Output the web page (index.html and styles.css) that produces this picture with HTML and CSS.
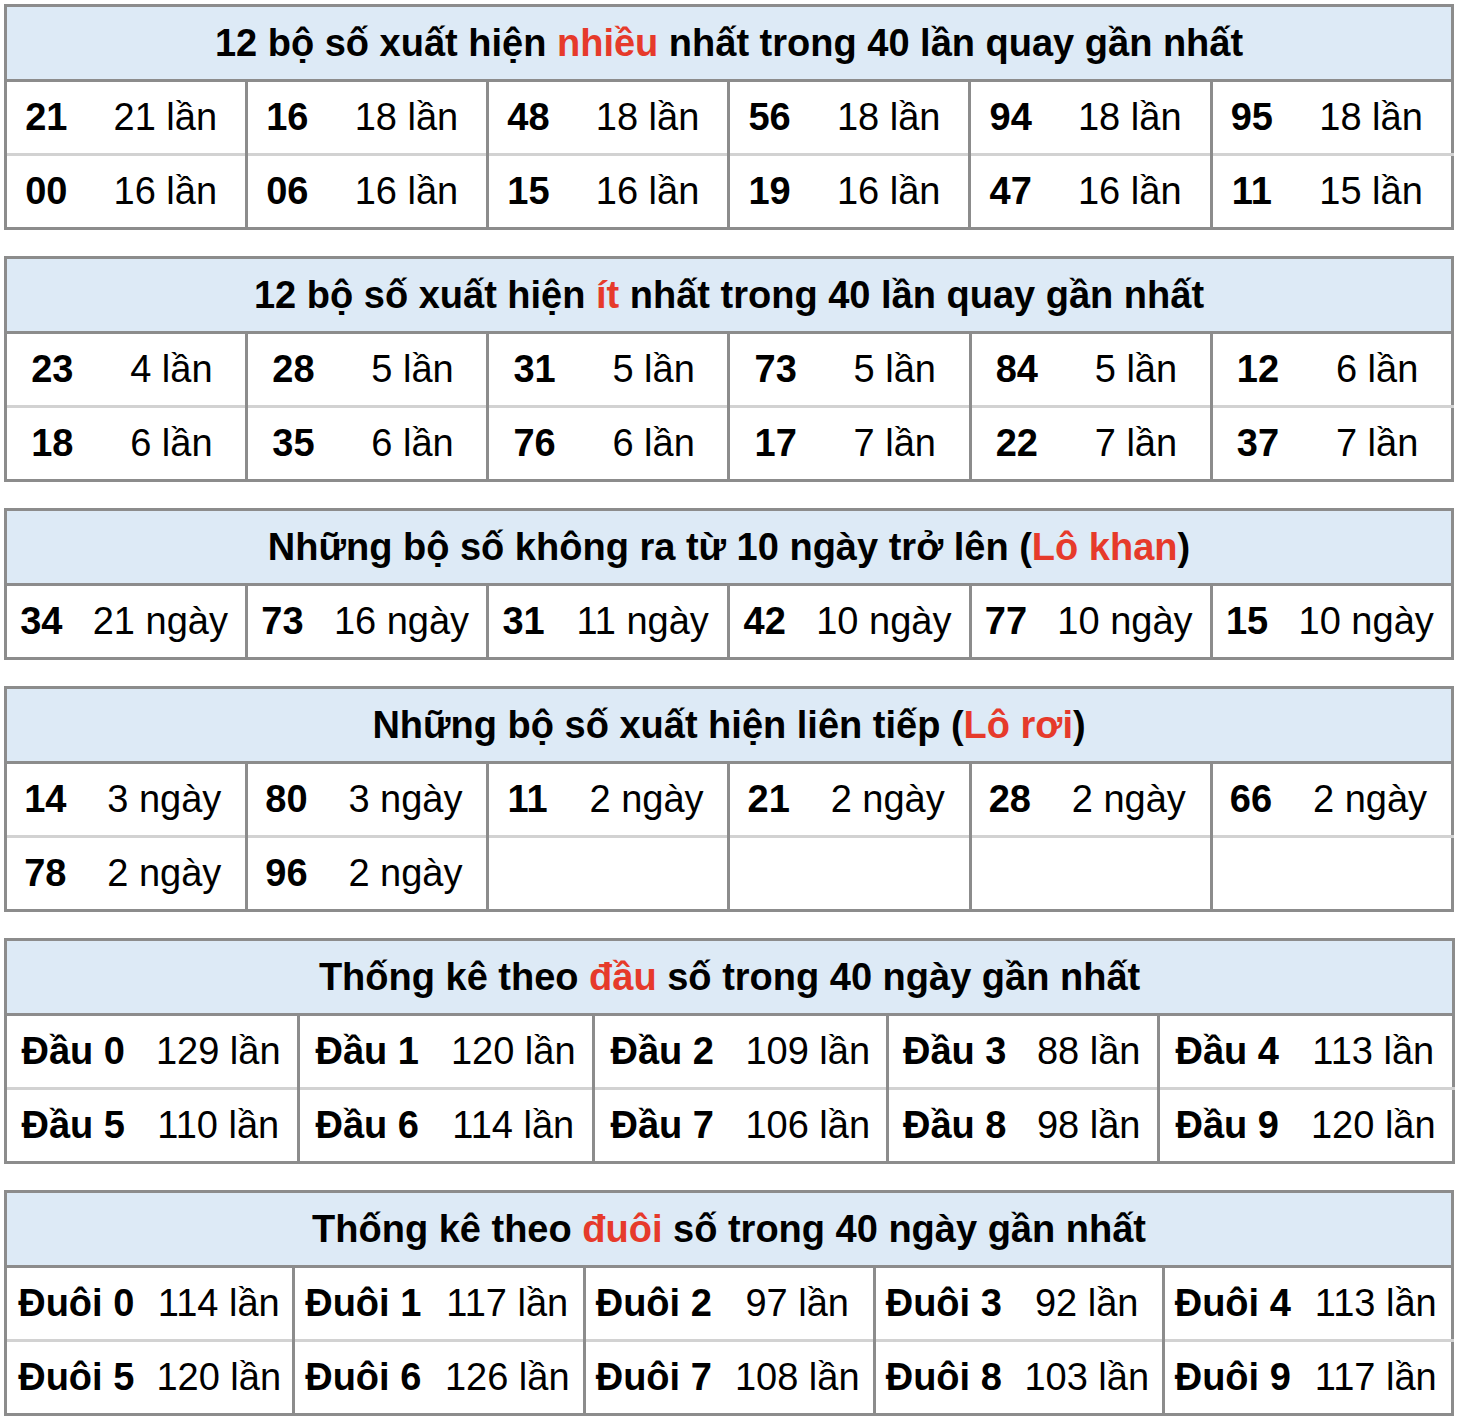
FILE: index.html
```html
<!DOCTYPE html>
<html lang="vi">
<head>
<meta charset="utf-8">
<title>Thống kê lô tô</title>
<link rel="stylesheet" href="styles.css">
</head>
<body>

<table class="stat t1">
  <colgroup><col class="n"><col class="c"><col class="n"><col class="c"><col class="n"><col class="c"><col class="n"><col class="c"><col class="n"><col class="c"><col class="n"><col class="c"></colgroup>
  <tr><th colspan="12">12 bộ số xuất hiện <span class="hl">nhiều</span> nhất trong 40 lần quay gần nhất</th></tr>
  <tr><td class="num">21</td><td>21 lần</td><td class="num">16</td><td>18 lần</td><td class="num">48</td><td>18 lần</td><td class="num">56</td><td>18 lần</td><td class="num">94</td><td>18 lần</td><td class="num">95</td><td>18 lần</td></tr>
  <tr><td class="num">00</td><td>16 lần</td><td class="num">06</td><td>16 lần</td><td class="num">15</td><td>16 lần</td><td class="num">19</td><td>16 lần</td><td class="num">47</td><td>16 lần</td><td class="num">11</td><td>15 lần</td></tr>
</table>

<table class="stat t2">
  <colgroup><col class="n"><col class="c"><col class="n"><col class="c"><col class="n"><col class="c"><col class="n"><col class="c"><col class="n"><col class="c"><col class="n"><col class="c"></colgroup>
  <tr><th colspan="12">12 bộ số xuất hiện <span class="hl">ít</span> nhất trong 40 lần quay gần nhất</th></tr>
  <tr><td class="num">23</td><td>4 lần</td><td class="num">28</td><td>5 lần</td><td class="num">31</td><td>5 lần</td><td class="num">73</td><td>5 lần</td><td class="num">84</td><td>5 lần</td><td class="num">12</td><td>6 lần</td></tr>
  <tr><td class="num">18</td><td>6 lần</td><td class="num">35</td><td>6 lần</td><td class="num">76</td><td>6 lần</td><td class="num">17</td><td>7 lần</td><td class="num">22</td><td>7 lần</td><td class="num">37</td><td>7 lần</td></tr>
</table>

<table class="stat t3">
  <colgroup><col class="n"><col class="c"><col class="n"><col class="c"><col class="n"><col class="c"><col class="n"><col class="c"><col class="n"><col class="c"><col class="n"><col class="c"></colgroup>
  <tr><th colspan="12">Những bộ số không ra từ 10 ngày trở lên (<span class="hl">Lô khan</span>)</th></tr>
  <tr><td class="num">34</td><td>21 ngày</td><td class="num">73</td><td>16 ngày</td><td class="num">31</td><td>11 ngày</td><td class="num">42</td><td>10 ngày</td><td class="num">77</td><td>10 ngày</td><td class="num">15</td><td>10 ngày</td></tr>
</table>

<table class="stat t4">
  <colgroup><col class="n"><col class="c"><col class="n"><col class="c"><col class="n"><col class="c"><col class="n"><col class="c"><col class="n"><col class="c"><col class="n"><col class="c"></colgroup>
  <tr><th colspan="12">Những bộ số xuất hiện liên tiếp (<span class="hl">Lô rơi</span>)</th></tr>
  <tr><td class="num">14</td><td>3 ngày</td><td class="num">80</td><td>3 ngày</td><td class="num">11</td><td>2 ngày</td><td class="num">21</td><td>2 ngày</td><td class="num">28</td><td>2 ngày</td><td class="num">66</td><td>2 ngày</td></tr>
  <tr><td class="num">78</td><td>2 ngày</td><td class="num">96</td><td>2 ngày</td><td class="num"></td><td></td><td class="num"></td><td></td><td class="num"></td><td></td><td class="num"></td><td></td></tr>
</table>

<table class="stat t5">
  <colgroup><col class="n1"><col class="c1"><col class="n2"><col class="c2"><col class="n3"><col class="c3"><col class="n4"><col class="c4"><col class="n5"><col class="c5"></colgroup>
  <tr><th colspan="10">Thống kê theo <span class="hl">đầu</span> số trong 40 ngày gần nhất</th></tr>
  <tr><td class="num">Đầu 0</td><td>129 lần</td><td class="num">Đầu 1</td><td>120 lần</td><td class="num">Đầu 2</td><td>109 lần</td><td class="num">Đầu 3</td><td>88 lần</td><td class="num">Đầu 4</td><td>113 lần</td></tr>
  <tr><td class="num">Đầu 5</td><td>110 lần</td><td class="num">Đầu 6</td><td>114 lần</td><td class="num">Đầu 7</td><td>106 lần</td><td class="num">Đầu 8</td><td>98 lần</td><td class="num">Đầu 9</td><td>120 lần</td></tr>
</table>

<table class="stat t6">
  <colgroup><col class="n1"><col class="c1"><col class="n2"><col class="c2"><col class="n3"><col class="c3"><col class="n4"><col class="c4"><col class="n5"><col class="c5"></colgroup>
  <tr><th colspan="10">Thống kê theo <span class="hl">đuôi</span> số trong 40 ngày gần nhất</th></tr>
  <tr><td class="num">Đuôi 0</td><td>114 lần</td><td class="num">Đuôi 1</td><td>117 lần</td><td class="num">Đuôi 2</td><td>97 lần</td><td class="num">Đuôi 3</td><td>92 lần</td><td class="num">Đuôi 4</td><td>113 lần</td></tr>
  <tr><td class="num">Đuôi 5</td><td>120 lần</td><td class="num">Đuôi 6</td><td>126 lần</td><td class="num">Đuôi 7</td><td>108 lần</td><td class="num">Đuôi 8</td><td>103 lần</td><td class="num">Đuôi 9</td><td>117 lần</td></tr>
</table>

</body>
</html>
```

FILE: styles.css
```css
html, body {
  background: #ffffff;
}

body {
  margin: 4px;
  font-family: "Liberation Sans", Arial, Helvetica, sans-serif;
  color: #000;
}

.stat {
  width: 1450px;
  table-layout: fixed;
  border-collapse: collapse;
  border: 3px solid #8c8c8c;
  margin: 0 0 26px 0;
  font-size: 38px;
}

.stat th {
  height: 72px;
  padding: 0;
  background: #ddeaf6;
  font-weight: bold;
  text-align: center;
  border-bottom: 3px solid #8c8c8c;
  white-space: nowrap;
}

.stat td {
  height: 71px;
  padding: 0;
  text-align: center;
  white-space: nowrap;
}

.stat tr + tr + tr td {
  border-top: 3px solid #d2d2d2;
}

.stat td.num {
  font-weight: bold;
  border-left: 3px solid #8c8c8c;
}

.hl {
  color: #e63a2b;
}

/* column widths per table */
.t1 .n { width: 80px; }
.t1 .c { width: 161px; }

.t2 .n { width: 92px; }
.t2 .c { width: 149px; }

.t3 .n { width: 70px; }
.t3 .c { width: 171px; }

.t4 .n { width: 78px; }
.t4 .c { width: 163px; }

.t5 .n1 { width: 134px; } .t5 .c1 { width: 159px; }
.t5 .n2 { width: 136px; } .t5 .c2 { width: 159px; }
.t5 .n3 { width: 136px; } .t5 .c3 { width: 158px; }
.t5 .n4 { width: 133px; } .t5 .c4 { width: 138px; }
.t5 .n5 { width: 136px; } .t5 .c5 { width: 159px; }

.t6 .n1 { width: 140px; } .t6 .c1 { width: 148px; }
.t6 .n2 { width: 138px; } .t6 .c2 { width: 153px; }
.t6 .n3 { width: 137px; } .t6 .c3 { width: 153px; }
.t6 .n4 { width: 137px; } .t6 .c4 { width: 152px; }
.t6 .n5 { width: 137px; } .t6 .c5 { width: 152px; }
```
